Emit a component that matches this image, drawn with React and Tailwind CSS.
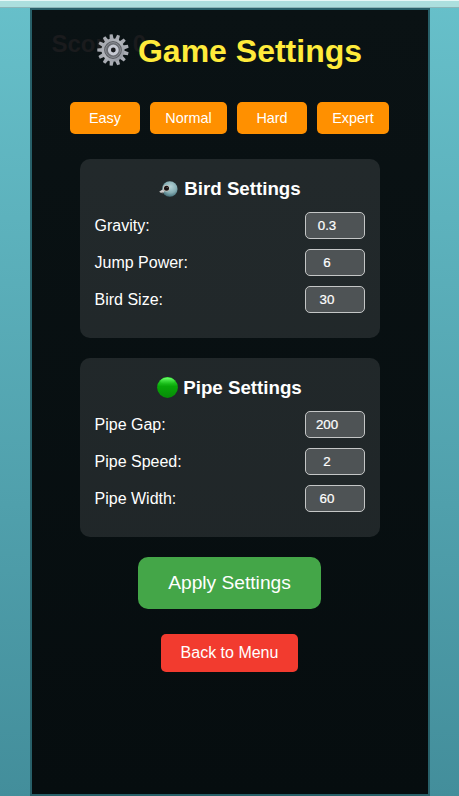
const presets = [
  { label: 'Easy', width: 'w-[70px]' },
  { label: 'Normal', width: 'w-[77px]' },
  { label: 'Hard', width: 'w-[70px]' },
  { label: 'Expert', width: 'w-[72px]' },
];

function GearIcon() {
  return (
    <svg className="h-8 w-8 shrink-0" viewBox="0 0 32 32">
      <defs>
        <linearGradient id="gear" x1="0" y1="0" x2="1" y2="1">
          <stop offset="0" stopColor="#a3a6ad" />
          <stop offset="0.5" stopColor="#b4b7bd" />
          <stop offset="1" stopColor="#8b8f98" />
        </linearGradient>
      </defs>
      <g fill="#a9acb3">
        {Array.from({ length: 13 }, (_, i) => (
          <path key={i} d="M13.9 6 L14.5 0.3 H17.5 L18.1 6 Z" transform={`rotate(${i * 27.69 - 7} 16 16)`} />
        ))}
      </g>
      <circle cx="16" cy="16" r="10.2" fill="#5d6066" stroke="url(#gear)" strokeWidth="2.6" />
      <circle cx="16" cy="16" r="7.4" fill="#686b71" stroke="#8b8e94" strokeWidth="1" />
      <circle cx="16.3" cy="16" r="3.9" fill="#17191c" stroke="#c6c9d2" strokeWidth="3" />
    </svg>
  );
}

function BirdIcon() {
  return (
    <svg className="h-5 w-[21px] shrink-0" viewBox="0 0 21 20">
      <defs>
        <radialGradient id="bird" cx="0.55" cy="0.35" r="0.65">
          <stop offset="0" stopColor="#b4d3d6" />
          <stop offset="0.6" stopColor="#86aeb4" />
          <stop offset="1" stopColor="#46707a" />
        </radialGradient>
      </defs>
      <circle cx="11.8" cy="10" r="7.8" fill="url(#bird)" />
      <path d="M4.4 10.4 L1.2 12.8 Q3 14.6 5.6 14 L6.4 12 Z" fill="#cfcdcd" />
      <path d="M2 13.3 L5.8 13 L5.4 14 Z" fill="#727575" />
      <circle cx="8.3" cy="9.3" r="3.3" fill="#c9c5bd" />
      <circle cx="8.5" cy="9.3" r="2.5" fill="#161011" />
      <circle cx="9.1" cy="8.6" r="0.45" fill="#ddd" />
    </svg>
  );
}

function GreenCircleIcon() {
  return (
    <svg className="h-[21px] w-[21px] shrink-0" viewBox="0 0 21 21">
      <defs>
        <linearGradient id="green" x1="0" y1="0" x2="0" y2="1">
          <stop offset="0" stopColor="#35ed35" />
          <stop offset="0.25" stopColor="#20c520" />
          <stop offset="0.45" stopColor="#08a608" />
          <stop offset="1" stopColor="#078b07" />
        </linearGradient>
        <linearGradient id="shine" x1="0" y1="0" x2="0" y2="1">
          <stop offset="0" stopColor="#72ff72" />
          <stop offset="1" stopColor="#20c520" stopOpacity="0" />
        </linearGradient>
      </defs>
      <circle cx="10.5" cy="10.5" r="10.4" fill="url(#green)" />
      <ellipse cx="10.5" cy="4.2" rx="7" ry="3.4" fill="url(#shine)" />
    </svg>
  );
}

function SettingsCard({ icon, title, rows }) {
  return (
    <section className="h-[179px] w-[300px] rounded-[10px] bg-white/10 px-[15px] pt-[19px]">
      <h2 className="flex h-[21px] items-center justify-center gap-[5px] text-[18.72px] font-bold whitespace-nowrap">
        {icon}
        <span className="pt-0.5">{title}</span>
      </h2>
      <div className="mt-[13px] flex flex-col gap-[10px]">
        {rows.map(([label, value]) => (
          <label key={label} className="flex h-[27px] items-center justify-between text-[16px]">
            {label}
            <input
              type="text"
              readOnly
              value={value}
              className="h-[27px] w-[60px] rounded-[5px] border border-[#c4c6c6] bg-[#4e5355] pr-[19px] pl-[4px] text-center text-[13.33px] text-white outline-none [-webkit-text-stroke:0.2px_white]"
            />
          </label>
        ))}
      </div>
    </section>
  );
}

export default function App() {
  return (
    <div
      className="flex h-[796px] w-[459px] flex-col overflow-hidden bg-linear-to-b from-[#67c0ca] to-[#438e9b] text-white"
      style={{ fontFamily: '"Liberation Sans", Arial, sans-serif' }}
    >
      <div className="h-2 shrink-0 border-t border-b border-t-[#e6f8f7] border-b-[#8bb5b7] bg-[#acdfde]" />
      <main className="relative mx-auto flex h-[788px] w-[400px] flex-col items-center border-2 border-[#286069] bg-linear-to-b from-[#0a1214] to-[#060d0f]">
        <div className="absolute top-[19px] left-5 text-[24px] leading-[30px] font-bold whitespace-nowrap text-[#1a1b1d]">
          Score: 0
        </div>
        <h1 className="relative mt-[22px] flex h-[38px] items-center gap-[9px] text-[32px] leading-[38px] font-bold whitespace-nowrap text-[#ffeb3b]">
          <span className="-mt-0.5">
            <GearIcon />
          </span>
          Game Settings
        </h1>
        <div className="mt-[32px] flex gap-[10px]">
          {presets.map(({ label, width }) => (
            <button key={label} className={`${width} h-8 rounded-[5px] bg-[#ff9000] pt-0.5 text-[14.4px]`}>
              {label}
            </button>
          ))}
        </div>
        <div className="mt-[25px] flex flex-col gap-5">
          <SettingsCard
            icon={<BirdIcon />}
            title="Bird Settings"
            rows={[['Gravity:', '0.3'], ['Jump Power:', '6'], ['Bird Size:', '30']]}
          />
          <SettingsCard
            icon={<GreenCircleIcon />}
            title="Pipe Settings"
            rows={[['Pipe Gap:', '200'], ['Pipe Speed:', '2'], ['Pipe Width:', '60']]}
          />
        </div>
        <button className="mt-5 h-[52px] w-[183px] rounded-[10px] bg-[#44a648] text-[19.2px]">Apply Settings</button>
        <button className="mt-[25px] h-[38px] w-[137px] rounded-[5px] bg-[#f23b2f] text-[16px]">Back to Menu</button>
      </main>
    </div>
  );
}
